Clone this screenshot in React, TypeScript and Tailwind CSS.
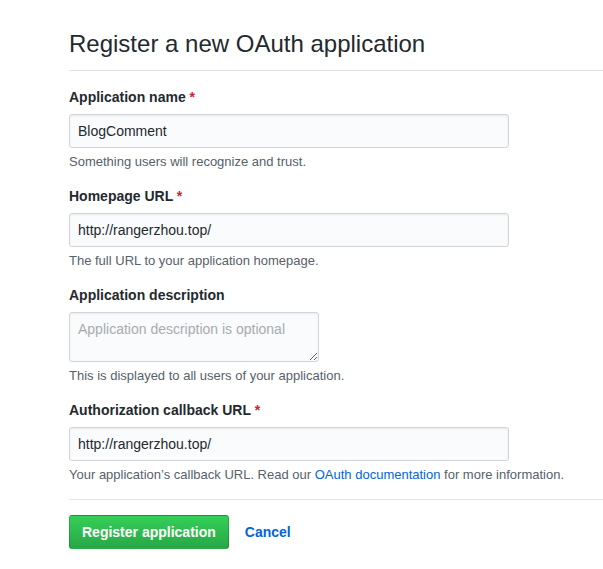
import React from "react";

function Label({ text, required }: { text: string; required?: boolean }) {
  return (
    <label className="block text-[14px] leading-[21px] font-bold text-[#24292e] mb-[6px]">
      {text}
      {required && <span className="text-[#cb2431]"> *</span>}
    </label>
  );
}

function Note({ children }: { children: React.ReactNode }) {
  return <p className="mt-[4px] text-[13px] leading-[19px] text-[#586069]">{children}</p>;
}

const inputCls =
  "block h-[34px] px-[8px] text-[14px] text-[#24292e] bg-[#fafbfc] border border-[#d1d5da] rounded-[3px] shadow-[inset_0_1px_2px_rgba(27,31,35,0.075)] outline-none";

export default function App() {
  return (
    <div
      className="min-h-[569px] bg-white pl-[69px] pt-[26px] overflow-hidden"
      style={{ fontFamily: '"Liberation Sans", Arial, sans-serif' }}
    >
      <div className="w-[600px]">
        <h1 className="text-[24px] leading-[36px] font-normal text-[#24292e] pb-[8px] border-b border-[#e1e4e8]">
          Register a new OAuth application
        </h1>

        <div className="mt-[16px] flex flex-col gap-[15px]">
          <div>
            <Label text="Application name" required />
            <input className={`${inputCls} w-[440px]`} defaultValue="BlogComment" />
            <Note>Something users will recognize and trust.</Note>
          </div>

          <div>
            <Label text="Homepage URL" required />
            <input className={`${inputCls} w-[440px]`} defaultValue="http://rangerzhou.top/" />
            <Note>The full URL to your application homepage.</Note>
          </div>

          <div>
            <Label text="Application description" />
            <textarea
              className={`${inputCls} w-[250px] h-[50px] py-[6px] resize placeholder:text-[#a8acb1]`}
              placeholder="Application description is optional"
            />
            <Note>This is displayed to all users of your application.</Note>
          </div>

          <div>
            <Label text="Authorization callback URL" required />
            <input className={`${inputCls} w-[440px]`} defaultValue="http://rangerzhou.top/" />
            <Note>
              Your application’s callback URL. Read our{" "}
              <a className="text-[#0366d6]">OAuth documentation</a> for more information.
            </Note>
          </div>
        </div>

        <div className="mt-[15px] border-t border-[#e1e4e8] pt-[15px] flex items-center gap-[16px]">
          <button className="h-[34px] px-[12px] text-[14px] font-bold text-white rounded-[3px] border border-[rgba(27,31,35,0.2)] bg-gradient-to-b from-[#34d058] to-[#28a745]">
            Register application
          </button>
          <a className="text-[14px] font-bold text-[#0366d6]">Cancel</a>
        </div>
      </div>
    </div>
  );
}
